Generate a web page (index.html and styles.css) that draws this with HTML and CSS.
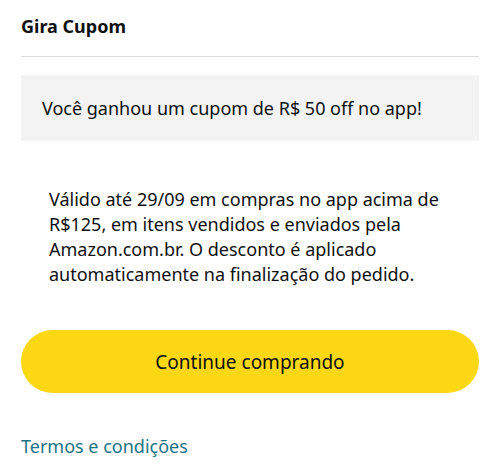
FILE: index.html
```html
<!DOCTYPE html>
<html lang="pt-BR">
<head>
    <meta charset="UTF-8">
    <meta name="viewport" content="width=device-width, initial-scale=1.0">
    <title>Gira Cupom</title>
    <link rel="stylesheet" href="styles.css">
</head>
<body>
    <main class="cupom">
        <h1 class="titulo">Gira Cupom</h1>
        <hr class="divisor">

        <div class="aviso">Você ganhou um cupom de R$ 50 off no app!</div>

        <p class="detalhes">
            Válido até 29/09 em compras no app acima de R$125, em itens vendidos e enviados pela Amazon.com.br. O desconto é aplicado automaticamente na finalização do pedido.
        </p>

        <button class="botao">Continue comprando</button>

        <a class="termos" href="#">Termos e condições</a>
    </main>
</body>
</html>
```

FILE: styles.css
```css
body {
    font-family: 'Noto Sans', sans-serif;
    margin: 0;
    padding: 0;
    color: #0f1111;
    background: #fff;
}

.cupom {
    padding: 12px 21px 0 21px;
    display: flex;
    flex-direction: column;
}

.titulo {
    font-size: 18px;
    font-weight: 700;
    margin: 0;
    line-height: 28px;
}

.divisor {
    border: none;
    border-top: 1px solid #dcdcdc;
    margin: 16px 0 18px 0;
}

.aviso {
    background-color: #f3f3f3;
    padding: 20px 21px;
    font-size: 18px;
    line-height: 26px;
}

.detalhes {
    font-size: 18px;
    line-height: 25px;
    margin: 46px 20px 0 28px;
}

.botao {
    margin-top: 43px;
    height: 63px;
    border: none;
    border-radius: 32px;
    background-color: #fcd814;
    font-family: 'Noto Sans', sans-serif;
    font-size: 19px;
    color: #0f1111;
}

.termos {
    margin-top: 40px;
    color: #1a7486;
    text-decoration: none;
    font-size: 18px;
    line-height: 26px;
}
```
